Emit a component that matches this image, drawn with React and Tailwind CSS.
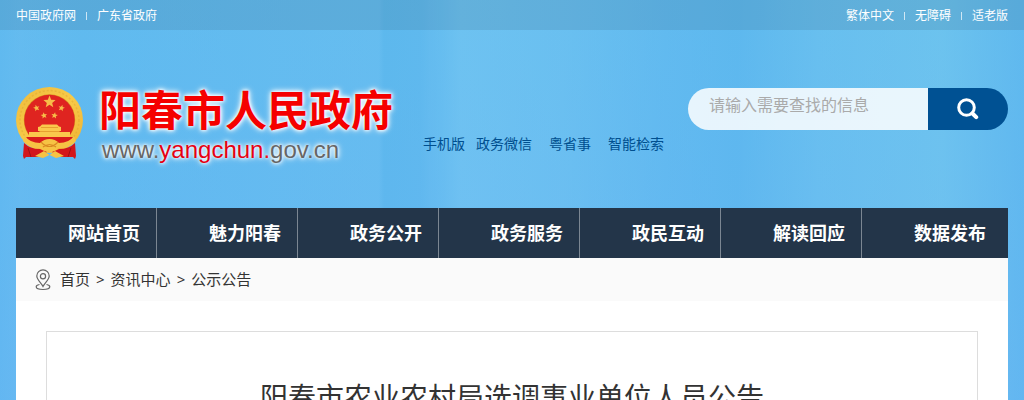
import React from 'react';

const leftLinks = ['中国政府网', '广东省政府'];
const rightLinks = ['繁体中文', '无障碍', '适老版'];
const navItems = ['网站首页', '魅力阳春', '政务公开', '政务服务', '政民互动', '解读回应', '数据发布'];
const crumbs = ['首页', '资讯中心', '公示公告'];

function LinkList({ items, label }) {
  return (
    <nav aria-label={label} className="flex items-center gap-[10px]">
      {items.map((item, i) => (
        <React.Fragment key={item}>
          {i > 0 && <span className="h-[8px] w-px bg-white/70" />}
          <a href="#" className="hover:underline">{item}</a>
        </React.Fragment>
      ))}
    </nav>
  );
}

const STAR = 'M0 -10 L2.6 -3.4 L9.5 -3.1 L4.2 1.4 L5.9 8.1 L0 4.4 L-5.9 8.1 L-4.2 1.4 L-9.5 -3.1 L-2.6 -3.4 Z';

function Emblem() {
  return (
    <svg viewBox="0 0 68 74" className="h-[74px] w-[68px] shrink-0" role="img" aria-label="国徽">
      <defs>
        <linearGradient id="gold" x1="0" y1="0" x2="1" y2="1">
          <stop offset="0" stopColor="#eebb3c" />
          <stop offset="0.5" stopColor="#f8ca48" />
          <stop offset="1" stopColor="#efb232" />
        </linearGradient>
      </defs>
      <ellipse cx="33.5" cy="34" rx="33.5" ry="33" fill="url(#gold)" />
      <circle cx="33.5" cy="34" r="29.5" fill="none" stroke="#dca02c" strokeWidth="1.5" strokeDasharray="2 2" opacity="0.4" />
      <circle cx="33.5" cy="34" r="25.7" fill="#d99022" />
      <circle cx="33.5" cy="34" r="25.2" fill="#df2420" />
      <g fill="#f7bd48">
        <path d={STAR} transform="translate(33.5 16) scale(.64)" />
        <path d={STAR} transform="translate(20.5 22) rotate(-15) scale(.34)" />
        <path d={STAR} transform="translate(45.5 22) rotate(15) scale(.34)" />
        <path d={STAR} transform="translate(28 29.5) rotate(-10) scale(.34)" />
        <path d={STAR} transform="translate(38.5 29.5) rotate(10) scale(.34)" />
      </g>
      <path d="M24 40.5 L26 38.5 H41 L43 40.5 L45 41 V45 H43 V46 H54 V51 H13 V46 H24 V45 H22 V41 Z" fill="#fac84c" />
      <path d="M25 41.500 H42 M23 45.500 H44" stroke="#de8f24" strokeWidth="0.7" />
      <path d="M10 51 H57 L54 57 L44 60 L33.500 66 L23 60 L13 57 Z" fill="#d81c1c" />
      <path d="M9 50 Q14 57 24 57 Q28 53 33.500 53 Q39 53 43 57 Q53 57 58 50 L60 55 Q54 63 43 62 Q38 66 33.500 66 Q29 66 24 62 Q13 63 7 55 Z" fill="#f6c344" />
      <path d="M25 56 Q33.500 65 42 56 M27 61 Q33.500 56 40 61" fill="none" stroke="#d98a22" strokeWidth="1.2" />
      <path d="M8 57 Q14 63 24 63 Q28 65 31 66 L22 71 H10 L8 73 L7 70 Z" fill="#d3161b" />
      <path d="M59 57 Q53 63 43 63 Q39 65 36 66 L45 71 H57 L59 73 L60 70 Z" fill="#d3161b" />
      <path d="M19 70 L28 65 L33.500 69 L39 65 L48 70 L40 72 L33.500 69 L27 72 Z" fill="#f6c344" />
      <path d="M12 62 L15 71 M55 62 L52 71" stroke="#a01015" strokeWidth="1" />
    </svg>
  );
}

function SearchIcon() {
  return (
    <svg viewBox="0 0 22 22" className="h-[22px] w-[22px]" fill="none" stroke="#fff" aria-hidden="true">
      <circle cx="9.500" cy="9.500" r="7.800" strokeWidth="3" />
      <path d="M15.500 15.500 L19.200 19.200" strokeWidth="4" strokeLinecap="round" />
    </svg>
  );
}

function PinIcon() {
  return (
    <svg viewBox="0 0 16 22" className="h-[22px] w-[16px] shrink-0" fill="none" stroke="#666" strokeWidth="1.2" aria-hidden="true">
      <path d="M8 17.500 C6.500 14.500 1.800 10.500 1.800 7 A6.200 6.200 0 0 1 14.200 7 C14.200 10.500 9.500 14.500 8 17.500 Z" />
      <circle cx="8" cy="7.200" r="2.600" />
      <path d="M4.500 15.500 C2.500 15.800 1.200 16.600 1.200 17.800 C1.200 19.500 4 20.500 8 20.500 C12 20.500 14.800 19.500 14.800 17.800 C14.800 16.600 13.500 15.800 11.500 15.500" />
    </svg>
  );
}

const GLOW = '[text-shadow:0_0_3px_#fff,0_0_5px_#fff,0_0_7px_#fff]';

export default function App() {
  return (
    <div className="min-h-screen bg-[#66b9f2] bg-[linear-gradient(180deg,rgba(92,190,238,0.400)_0px,rgba(100,182,245,0.400)_400px),linear-gradient(90deg,#62b7ef_0%,#69baf0_2%,#62b8ef_8%,#66baf0_22%,#6bbcf0_36%,#6bbcf0_37%,#5db5ec_37.500%,#60b6ed_41%,#68baef_42%,#6bbdf0_43%,#78c5f2_45%,#72c1f1_55%,#64b8f0_65%,#5eb5ee_72%,#6fc0ef_80%,#76c6ee_92%,#61b6ee_100%)] font-['Noto_Sans','Noto_Sans_CJK_SC',sans-serif]">
      <div className="flex h-[30px] items-center justify-between bg-[#3c6e8c]/20 px-4 pt-px text-[12px] text-white">
        <LinkList items={leftLinks} label="上级网站" />
        <LinkList items={rightLinks} label="辅助功能" />
      </div>

      <header className="flex h-[178px] items-start px-4 pt-14">
        <a href="#" className="flex items-start gap-[15px]">
          <Emblem />
          <div className="whitespace-nowrap">
            <div className={`text-[42px] leading-[48px] font-bold text-[#f50000] ${GLOW}`}>阳春市人民政府</div>
            <div className={`pl-[3px] font-['Liberation_Sans',sans-serif] text-[24px] leading-[32px] text-[#666] ${GLOW}`}>
              www.<span className="text-[#e60012]">yangchun.</span>gov.cn
            </div>
          </div>
        </a>
        <nav aria-label="快捷入口" className="mt-12 ml-[30px] flex gap-[17px] text-[14px] leading-5 whitespace-nowrap text-[#004f8f]">
          <span className="flex gap-[11px]">
            <a href="#">手机版</a>
            <a href="#">政务微信</a>
          </span>
          <a href="#">粤省事</a>
          <a href="#">智能检索</a>
        </nav>
        <form className="mt-[2px] ml-auto flex h-[42px] w-[320px] shrink-0 overflow-hidden rounded-full" onSubmit={(e) => e.preventDefault()}>
          <input
            type="text"
            aria-label="搜索"
            placeholder="请输入需要查找的信息"
            className="min-w-0 flex-1 bg-white/85 pr-2 pb-2 pl-[21px] text-[16px] text-[#333] outline-none placeholder:text-[#aaa]"
          />
          <button type="submit" aria-label="搜索" className="flex w-20 items-center justify-center bg-[#005193]">
            <SearchIcon />
          </button>
        </form>
      </header>

      <div className="px-4">
        <nav aria-label="主导航" className="flex bg-[#233549] text-[18px] leading-[50px] font-bold text-white">
          {navItems.map((item) => (
            <a key={item} href="#" className="basis-[141px] border-r border-[#7b8692] pl-[52px] last:grow last:border-r-0">{item}</a>
          ))}
        </nav>
        <main className="bg-white">
          <nav aria-label="当前位置" className="flex h-[43px] items-center bg-[#fafafa] pl-[19px] text-[15px] text-[#333]">
            <PinIcon />
            <div className="flex gap-[6px] pl-[9px]">
              {crumbs.map((item, i) => (
                <React.Fragment key={item}>
                  {i > 0 && <span>&gt;</span>}
                  <a href="#">{item}</a>
                </React.Fragment>
              ))}
            </div>
          </nav>
          <div className="px-[30px] pt-[30px]">
            <article className="border border-b-0 border-[#ddd] px-8 pt-11 pb-8">
              <h1 className="text-center text-[28px] leading-[42px] text-[#333]">阳春市农业农村局选调事业单位人员公告</h1>
            </article>
          </div>
        </main>
      </div>
    </div>
  );
}
